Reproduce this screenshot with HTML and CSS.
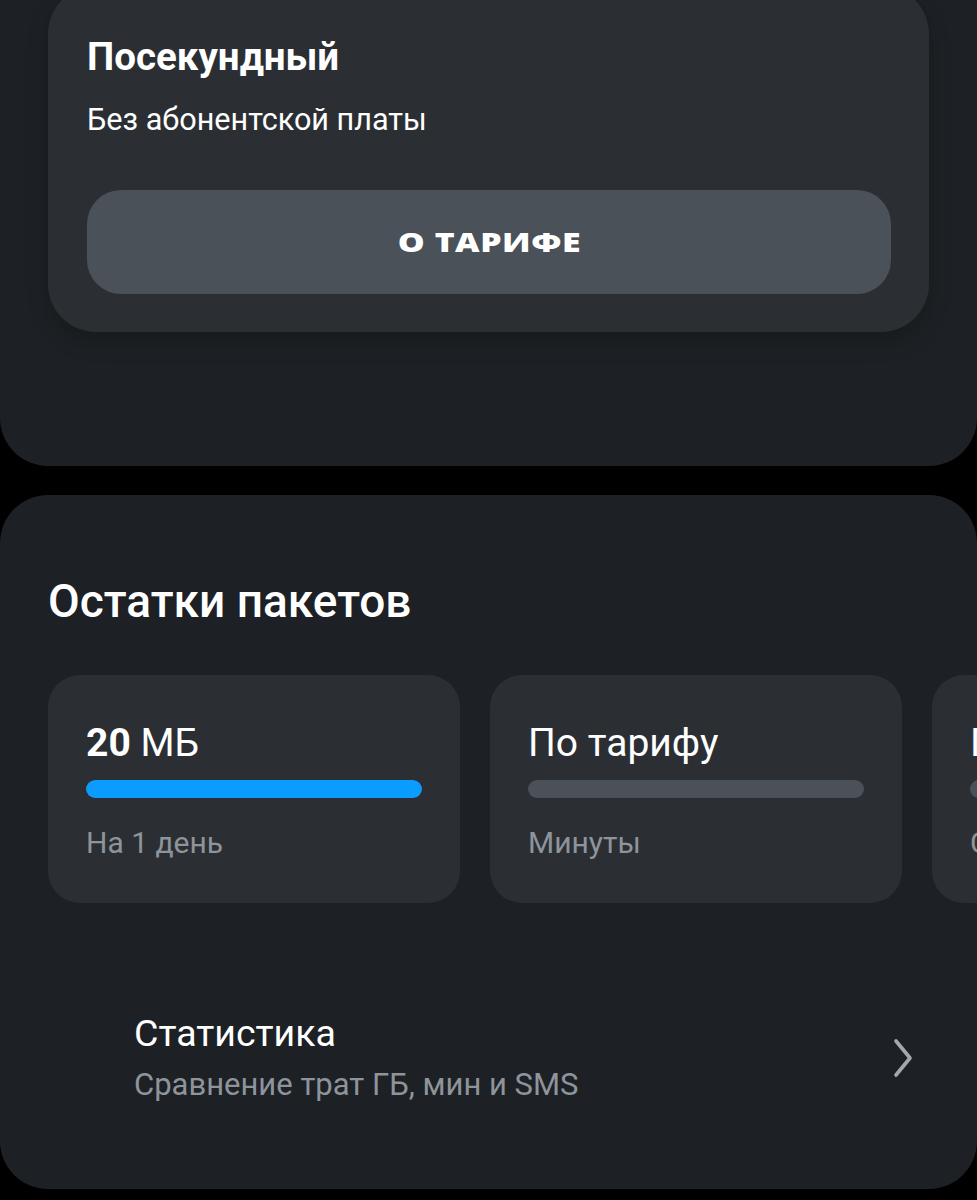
FILE: index.html
```html
<!DOCTYPE html>
<html lang="ru">
<head>
<meta charset="utf-8">
<link rel="stylesheet" href="styles.css">
</head>
<body>
<section class="top-card">
  <div class="tariff">
    <h2 class="tariff-title">Посекундный</h2>
    <p class="tariff-sub">Без абонентской платы</p>
    <button class="tariff-btn"><span class="btn-label">О ТАРИФЕ</span></button>
  </div>
</section>

<section class="packs-card">
  <h1 class="packs-title">Остатки пакетов</h1>
  <div class="packs-row">
    <div class="pack">
      <div class="pack-value"><b>20</b> МБ</div>
      <div class="bar"><div class="bar-fill" style="width:100%"></div></div>
      <div class="pack-label">На 1 день</div>
    </div>
    <div class="pack">
      <div class="pack-value">По тарифу</div>
      <div class="bar"></div>
      <div class="pack-label">Минуты</div>
    </div>
    <div class="pack">
      <div class="pack-value">По тарифу</div>
      <div class="bar"></div>
      <div class="pack-label">СМС</div>
    </div>
  </div>
  <div class="stats">
    <div class="stats-text">
      <div class="stats-title">Статистика</div>
      <div class="stats-sub">Сравнение трат ГБ, мин и SMS</div>
    </div>
    <svg class="chevron" width="24" height="40" viewBox="0 0 24 40">
      <path d="M5 3 L19 20 L5 37" fill="none" stroke="#a3a8ae" stroke-width="3.6" stroke-linecap="round" stroke-linejoin="round"/>
    </svg>
  </div>
</section>
</body>
</html>
```

FILE: styles.css
```css
* { box-sizing: border-box; }
html, body {
  margin: 0;
  padding: 0;
  background: #000;
  font-family: Roboto, "Noto Sans", sans-serif;
  color: #fff;
  overflow: hidden;
}

.top-card {
  display: flow-root;
  background: #1d2024;
  border-radius: 0 0 48px 48px;
  padding: 0 48px 134px;
  height: 466px;
}

.tariff {
  margin-top: -14px;
  background: #2b2f34;
  border-radius: 48px;
  padding: 48px 38px 38px 39px;
  height: 346px;
  box-shadow: 0 10px 22px rgba(0,0,0,0.18);
}

.tariff-title {
  margin: 0;
  font-size: 38.5px;
  font-weight: 700;
  line-height: 46px;
}

.tariff-sub {
  margin: 21px 0 0;
  font-size: 30.6px;
  font-weight: 400;
  line-height: 38px;
}

.tariff-btn {
  display: flex;
  align-items: center;
  justify-content: center;
  width: 100%;
  margin-top: 51px;
  height: 104px;
  border: 0;
  border-radius: 34px;
  background: #4a5159;
  color: #fff;
  font-family: "Open Sans", Roboto, sans-serif;
  font-weight: 800;
  font-size: 26px;
  letter-spacing: 0.4px;
}

.btn-label {
  display: inline-block;
  transform: scaleX(1.3);
}

.packs-card {
  margin-top: 29px;
  background: #1d2024;
  border-radius: 48px;
  height: 694px;
  padding: 79px 0 0 48px;
  overflow: hidden;
}

.packs-title {
  margin: 0;
  font-size: 46px;
  font-weight: 500;
  line-height: 54px;
}

.packs-row {
  display: flex;
  gap: 30px;
  margin-top: 47px;
}

.pack {
  flex: 0 0 412px;
  height: 228px;
  background: #2b2f34;
  border-radius: 32px;
  padding: 45px 38px 0 38px;
}

.pack-value {
  font-size: 39px;
  line-height: 46px;
  font-weight: 400;
}
.pack-value b { font-weight: 700; }

.bar {
  margin-top: 14px;
  height: 18px;
  border-radius: 9px;
  background: #4a5159;
  overflow: hidden;
}
.bar-fill {
  height: 100%;
  background: #0a9cff;
  border-radius: 9px;
}

.pack-label {
  margin-top: 26px;
  font-size: 30px;
  line-height: 38px;
  color: #8e949b;
  white-space: nowrap;
}

.stats {
  display: flex;
  align-items: center;
  justify-content: space-between;
  margin-top: 108px;
  padding: 0 62px 0 86px;
}

.stats-title {
  font-size: 37.5px;
  line-height: 44px;
}

.stats-sub {
  margin-top: 11px;
  font-size: 31px;
  line-height: 38px;
  color: #8e949b;
}

.chevron { display: block; }
```
